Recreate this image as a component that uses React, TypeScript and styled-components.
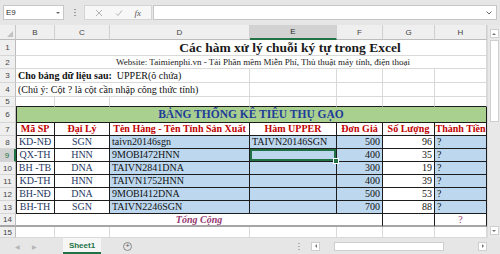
import { Fragment } from "react";
import styled, { createGlobalStyle, css } from "styled-components";

const GlobalStyle = createGlobalStyle`
  html, body {
    margin: 0;
    padding: 0;
    background: #fff;
  }
  body {
    font-family: "Liberation Serif", "Times New Roman", serif;
  }
`;

const DARK = "#1c1c1c";
const GRID = "#d9d9d9";
const GREEN = "#217346";
const BLUE = "#bdd7ee";

const Window = styled.div`
  width: 500px;
  height: 254px;
  display: flex;
  flex-direction: column;
  overflow: hidden;
  background: #e6e6e6;
`;

const FormulaBar = styled.div`
  height: 25px;
  flex: none;
  display: flex;
  align-items: center;
  padding: 0 3px;
  box-sizing: border-box;
`;

const NameBox = styled.div`
  width: 61px;
  height: 15px;
  box-sizing: border-box;
  background: #fff;
  border: 1px solid #c6c6c6;
  display: flex;
  align-items: center;
  justify-content: space-between;
  padding: 0 3px 0 2px;
  font-family: "Liberation Sans", Arial, sans-serif;
  font-size: 8px;
  color: #333;
`;

const Caret = styled.span`
  width: 0;
  height: 0;
  border-left: 2px solid transparent;
  border-right: 2px solid transparent;
  border-top: 2px solid #666;
`;

const Grip = styled.div`
  width: 2px;
  height: 10px;
  margin: 0 8px 0 10px;
  background: radial-gradient(circle, #9a9a9a 0.8px, transparent 1px) 0 0 / 2px 3px;
`;

const FxBox = styled.div`
  width: 68px;
  height: 15px;
  box-sizing: border-box;
  background: #f7f7f7;
  border: 1px solid #d4d4d4;
  display: flex;
  align-items: center;
  justify-content: space-around;
  padding: 0 4px;
`;

const FxLabel = styled.span`
  font-family: "Liberation Serif", serif;
  font-style: italic;
  font-size: 9px;
  color: #555;
`;

const FormulaInput = styled.div`
  flex: 1;
  height: 15px;
  margin-left: 1px;
  box-sizing: border-box;
  background: #fff;
  border: 1px solid #c6c6c6;
  display: flex;
  align-items: center;
  justify-content: flex-end;
  padding-right: 4px;
`;

const Main = styled.div`
  flex: none;
  height: 213px;
  display: flex;
`;

const Sheet = styled.div`
  width: 487px;
  display: grid;
  grid-template-columns: 16px 39px 55px 140px 87px 46px 52px 52px;
  grid-template-rows: 15px 16px 13px 14px 14px 10px 16px 13px repeat(6, 13px) 13px 11px;
  background: #fff;
`;

const Corner = styled.div`
  box-sizing: border-box;
  background: #efefef;
  border-right: 1px solid #c6c6c6;
  border-bottom: 1px solid #bcbcbc;
  position: relative;
  &::after {
    content: "";
    position: absolute;
    right: 2px;
    bottom: 2px;
    border-left: 6px solid transparent;
    border-bottom: 6px solid #c2c2c2;
  }
`;

const ColHead = styled.div<{ $active?: boolean }>`
  box-sizing: border-box;
  background: ${(p) => (p.$active ? "#d2d2d2" : "#efefef")};
  border-right: 1px solid #d0d0d0;
  border-bottom: ${(p) => (p.$active ? `2px solid ${GREEN}` : "1px solid #bcbcbc")};
  display: flex;
  align-items: center;
  justify-content: center;
  font-family: "Liberation Sans", Arial, sans-serif;
  font-size: 8px;
  color: ${(p) => (p.$active ? "#2a2a2a" : "#444")};
`;

const RowHead = styled.div<{ $active?: boolean; $thick?: boolean }>`
  box-sizing: border-box;
  background: ${(p) => (p.$active ? "#d2d2d2" : "#efefef")};
  border-right: ${(p) => (p.$active ? `2px solid ${GREEN}` : "1px solid #bcbcbc")};
  border-bottom: ${(p) => (p.$thick ? "2px solid #a6a6a6" : "1px solid #d6d6d6")};
  display: flex;
  align-items: center;
  justify-content: center;
  font-family: "Liberation Sans", Arial, sans-serif;
  font-size: 8px;
  color: ${(p) => (p.$active ? GREEN : "#444")};
`;

type CellProps = {
  $span?: number;
  $bg?: string;
  $r?: boolean;
  $b?: boolean;
  $l?: boolean;
  $thick?: boolean;
  $align?: "left" | "center" | "right";
  $color?: string;
  $bold?: boolean;
  $italic?: boolean;
  $size?: number;
  $selected?: boolean;
  $pad?: number;
};

const Cell = styled.div<CellProps>`
  box-sizing: border-box;
  grid-column: span ${(p) => p.$span || 1};
  background: ${(p) => p.$bg || "#fff"};
  border-right: 1px solid ${(p) => (p.$r ? DARK : GRID)};
  border-bottom: ${(p) => (p.$thick ? "2px solid #a6a6a6" : `1px solid ${p.$b ? DARK : GRID}`)};
  display: flex;
  align-items: center;
  justify-content: ${(p) =>
    p.$align === "center" ? "center" : p.$align === "right" ? "flex-end" : "flex-start"};
  padding: 0 2px;
  padding-left: ${(p) => (p.$pad ? `${p.$pad}px` : "2px")};
  white-space: nowrap;
  overflow: hidden;
  font-size: ${(p) => p.$size || 10}px;
  line-height: 1;
  color: ${(p) => p.$color || "#111"};
  font-weight: ${(p) => (p.$bold ? 700 : 400)};
  font-style: ${(p) => (p.$italic ? "italic" : "normal")};
  position: relative;
  ${(p) =>
    p.$l &&
    css`
      box-shadow: inset 1px 0 0 ${DARK};
    `}
  ${(p) =>
    p.$selected &&
    css`
      overflow: visible;
      box-shadow: inset 0 0 0 2px ${GREEN};
      &::after {
        content: "";
        position: absolute;
        right: -3px;
        bottom: -3px;
        width: 4px;
        height: 4px;
        background: ${GREEN};
        border: 1px solid #fff;
        z-index: 2;
      }
    `}
`;

const VScroll = styled.div`
  width: 13px;
  display: flex;
  flex-direction: column;
  align-items: center;
  padding: 4px 0 3px;
  box-sizing: border-box;
  background: #e8e8e8;
  border-left: 1px solid #dadada;
`;

const ScrollBtn = styled.div<{ $dir: "up" | "down" | "left" | "right" }>`
  width: 9px;
  height: 9px;
  flex: none;
  box-sizing: border-box;
  background: #fff;
  border: 1px solid #cfcfcf;
  display: flex;
  align-items: center;
  justify-content: center;
  &::before {
    content: "";
    width: 0;
    height: 0;
    ${(p) =>
      p.$dir === "up"
        ? css`
            border-left: 2px solid transparent;
            border-right: 2px solid transparent;
            border-bottom: 2px solid #777;
          `
        : p.$dir === "down"
        ? css`
            border-left: 2px solid transparent;
            border-right: 2px solid transparent;
            border-top: 2px solid #777;
          `
        : p.$dir === "left"
        ? css`
            border-top: 2px solid transparent;
            border-bottom: 2px solid transparent;
            border-right: 2px solid #777;
          `
        : css`
            border-top: 2px solid transparent;
            border-bottom: 2px solid transparent;
            border-left: 2px solid #777;
          `}
  }
`;

const VTrack = styled.div`
  flex: 1;
  width: 9px;
  padding: 2px 0;
  box-sizing: border-box;
`;

const VThumb = styled.div`
  width: 9px;
  height: 82px;
  box-sizing: border-box;
  background: #fff;
  border: 1px solid #cfcfcf;
`;

const TabBar = styled.div`
  flex: 1;
  display: flex;
  align-items: stretch;
  background: #e6e6e6;
  font-family: "Liberation Sans", Arial, sans-serif;
`;

const NavArrow = styled.span<{ $left: number }>`
  margin-left: ${(p) => p.$left}px;
  align-self: center;
  font-size: 6px;
  color: #b5b5b5;
`;

const SheetTab = styled.div`
  margin-left: 26px;
  width: 38px;
  background: #f6f6f6;
  border-bottom: 2px solid ${GREEN};
  box-sizing: border-box;
  display: flex;
  align-items: center;
  justify-content: center;
  font-size: 8px;
  font-weight: 700;
  color: ${GREEN};
`;

const AddSheet = styled.div`
  margin-left: 22px;
  align-self: center;
  width: 9px;
  height: 9px;
  box-sizing: border-box;
  border: 1px solid #8a8a8a;
  border-radius: 50%;
  display: flex;
  align-items: center;
  justify-content: center;
  font-size: 8px;
  line-height: 1;
  color: #666;
`;

const HScroll = styled.div`
  margin-left: auto;
  margin-right: 13px;
  display: flex;
  align-items: center;
`;

const HGrip = styled.div`
  width: 2px;
  height: 9px;
  margin-right: 11px;
  background: radial-gradient(circle, #b0b0b0 0.8px, transparent 1px) 0 0 / 2px 3px;
`;

const HTrack = styled.div`
  width: 158px;
  height: 9px;
  display: flex;
  align-items: center;
  padding: 0 2px 0 14px;
  box-sizing: border-box;
`;

const HThumb = styled.div`
  width: 110px;
  height: 9px;
  box-sizing: border-box;
  background: #fff;
  border: 1px solid #cfcfcf;
`;

type DataRow = {
  n: number;
  code: string;
  agent: string;
  name: string;
  upper: string;
  price: number;
  qty: number;
};

const data: DataRow[] = [
  { n: 8, code: "KD-NĐ", agent: "SGN", name: "taivn20146sgn", upper: "TAIVN20146SGN", price: 500, qty: 96 },
  { n: 9, code: "QX-TH", agent: "HNN", name: "9MOBI472HNN", upper: "", price: 400, qty: 35 },
  { n: 10, code: "BH -TB", agent: "DNA", name: "TAIVN2841DNA", upper: "", price: 300, qty: 19 },
  { n: 11, code: "KD-TH", agent: "HNN", name: "TAIVN1752HNN", upper: "", price: 400, qty: 39 },
  { n: 12, code: "BH-NĐ", agent: "DNA", name: "9MOBI412DNA", upper: "", price: 500, qty: 53 },
  { n: 13, code: "BH-TH", agent: "SGN", name: "TAIVN2246SGN", upper: "", price: 700, qty: 88 },
];

const headers = [
  "Mã SP",
  "Đại Lý",
  "Tên Hàng - Tên Tỉnh Sản Xuất",
  "Hàm UPPER",
  "Đơn Giá",
  "Số Lượng",
  "Thành Tiền",
];

const columns = ["B", "C", "D", "E", "F", "G", "H"];

function XIcon() {
  return (
    <svg width="8" height="8" viewBox="0 0 8 8">
      <path d="M1 1 L7 7 M7 1 L1 7" stroke="#b4b4b4" strokeWidth="1" fill="none" />
    </svg>
  );
}

function CheckIcon() {
  return (
    <svg width="8" height="8" viewBox="0 0 8 8">
      <path d="M1 4.5 L3 6.5 L7 1.5" stroke="#b4b4b4" strokeWidth="1" fill="none" />
    </svg>
  );
}

function Chevron() {
  return (
    <svg width="6" height="4" viewBox="0 0 6 4">
      <path d="M0.5 0.5 L3 3 L5.5 0.5" stroke="#666" strokeWidth="1" fill="none" />
    </svg>
  );
}

export default function App() {
  return (
    <>
      <GlobalStyle />
      <Window>
        <FormulaBar>
          <NameBox>
            E9
            <Caret />
          </NameBox>
          <Grip />
          <FxBox>
            <XIcon />
            <CheckIcon />
            <FxLabel>fx</FxLabel>
          </FxBox>
          <FormulaInput>
            <Chevron />
          </FormulaInput>
        </FormulaBar>

        <Main>
          <Sheet>
            <Corner />
            {columns.map((c) => (
              <ColHead key={c} $active={c === "E"}>
                {c}
              </ColHead>
            ))}

            <RowHead>1</RowHead>
            <Cell $span={7} $align="center" $bold $size={13.5} $pad={80} $color="#1a1a1a">
              Các hàm xử lý chuỗi ký tự trong Excel
            </Cell>

            <RowHead>2</RowHead>
            <Cell $span={7} $align="center" $size={9} $pad={26} $color="#222">
              Website: Taimienphi.vn - Tải Phần mềm Miễn Phí, Thủ thuật máy tính, điện thoại
            </Cell>

            <RowHead>3</RowHead>
            <Cell $span={3}>
              <b>Cho bảng dữ liệu sau:</b>&nbsp; UPPER(ô chứa)
            </Cell>
            <Cell />
            <Cell />
            <Cell />
            <Cell />

            <RowHead>4</RowHead>
            <Cell $span={3}>(Chú ý: Cột ? là cột cần nhập công thức tính)</Cell>
            <Cell />
            <Cell />
            <Cell />
            <Cell />

            <RowHead>5</RowHead>
            {columns.map((c) => (
              <Cell key={c} $b />
            ))}

            <RowHead>6</RowHead>
            <Cell $span={7} $bg="#a9d08e" $r $b $l $align="center" $bold $size={11.5} $color="#1f3c99">
              BẢNG THỐNG KÊ TIÊU THỤ GẠO
            </Cell>

            <RowHead>7</RowHead>
            {headers.map((h, i) => (
              <Cell key={h} $r $b $l={i === 0} $align="center" $bold $color="#c00000">
                {h}
              </Cell>
            ))}

            {data.map((row) => (
              <Fragment key={row.n}>
                <RowHead $active={row.n === 9}>{row.n}</RowHead>
                <Cell $r $b $l $align="center" $color="#1f3864">
                  {row.code}
                </Cell>
                <Cell $r $b $align="center" $color="#1f3864">
                  {row.agent}
                </Cell>
                <Cell $r $b $bg={BLUE}>
                  {row.name}
                </Cell>
                <Cell $r $b $bg={BLUE} $selected={row.n === 9}>
                  {row.upper}
                </Cell>
                <Cell $r $b $bg={BLUE} $align="right">
                  {row.price}
                </Cell>
                <Cell $r $b $align="right">
                  {row.qty}
                </Cell>
                <Cell $r $b $bg={BLUE}>
                  ?
                </Cell>
              </Fragment>
            ))}

            <RowHead $thick>14</RowHead>
            <Cell $span={5} $r $thick $align="center" $bold $italic $color="#953870">
              Tổng Cộng
            </Cell>
            <Cell $r $thick />
            <Cell $r $thick $align="center" $color="#953870">
              ?
            </Cell>

            <RowHead>15</RowHead>
            {columns.map((c) => (
              <Cell key={c} />
            ))}
          </Sheet>

          <VScroll>
            <ScrollBtn $dir="up" />
            <VTrack>
              <VThumb />
            </VTrack>
            <ScrollBtn $dir="down" />
          </VScroll>
        </Main>

        <TabBar>
          <NavArrow $left={15}>◀</NavArrow>
          <NavArrow $left={12}>▶</NavArrow>
          <SheetTab>Sheet1</SheetTab>
          <AddSheet>+</AddSheet>
          <HScroll>
            <HGrip />
            <ScrollBtn $dir="left" />
            <HTrack>
              <HThumb />
            </HTrack>
            <ScrollBtn $dir="right" />
          </HScroll>
        </TabBar>
      </Window>
    </>
  );
}
